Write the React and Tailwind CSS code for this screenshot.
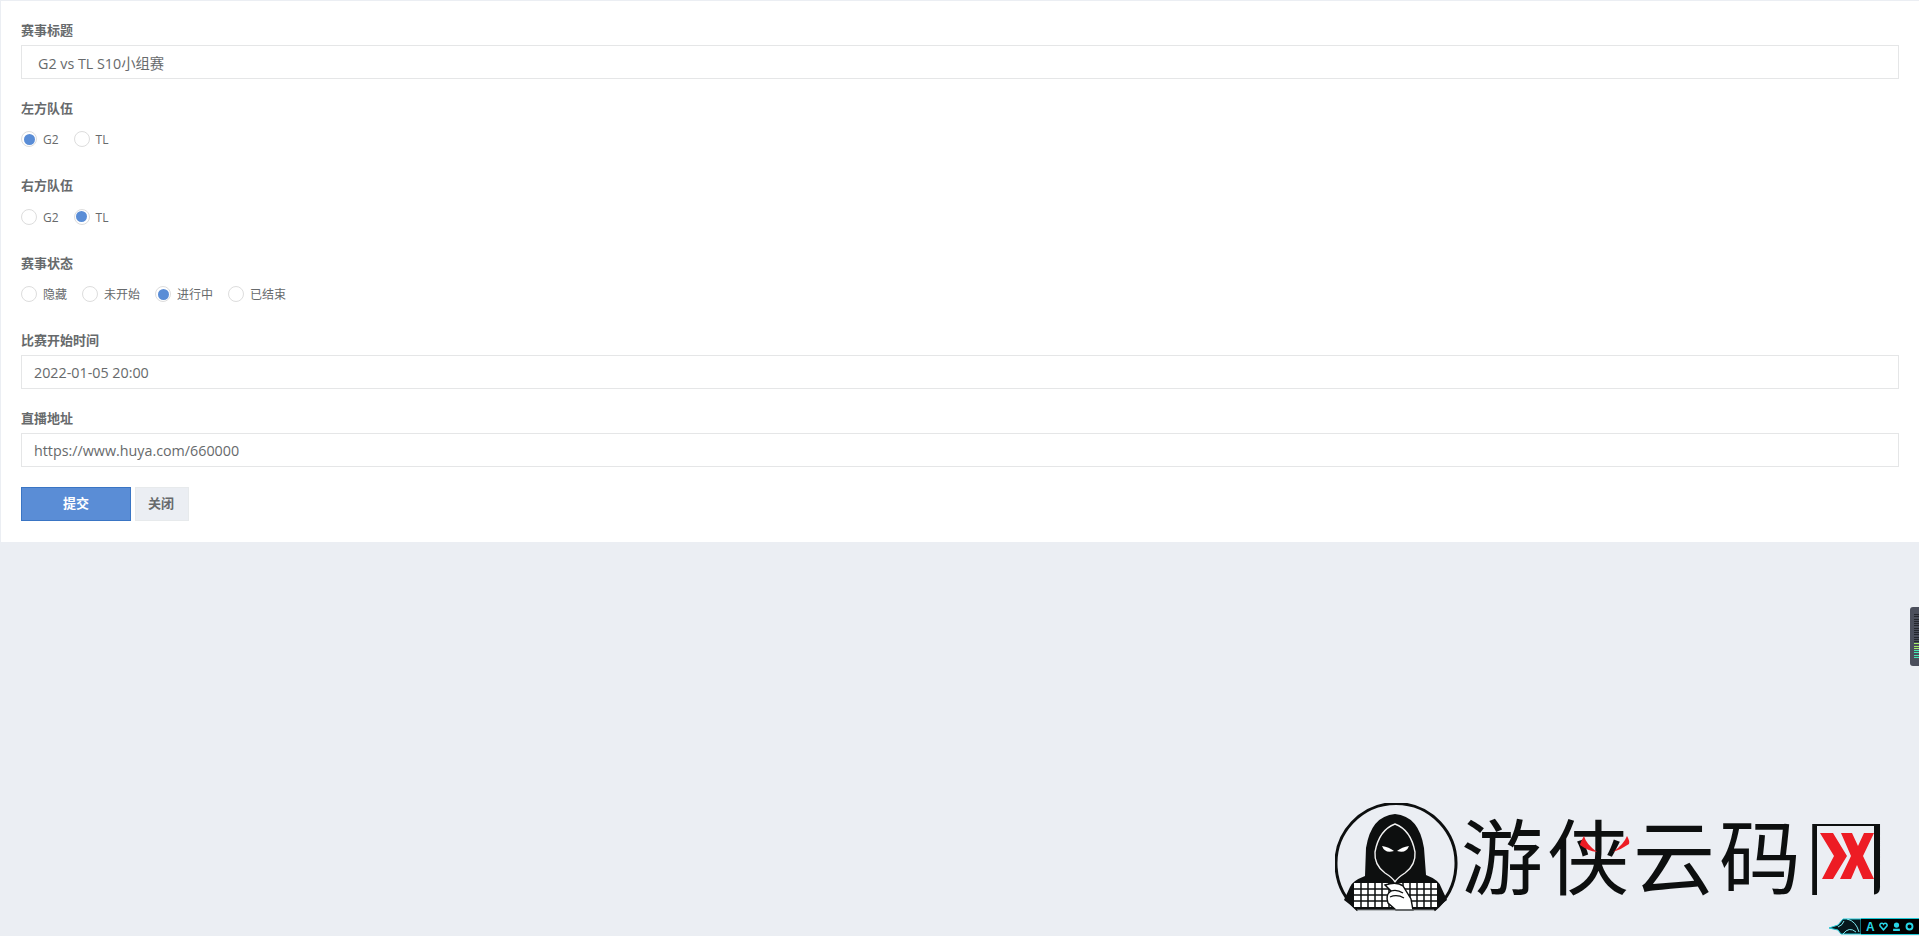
import React from 'react';

const FONT = "font-['Open_Sans','Noto_Sans_CJK_SC',sans-serif]";

function Field({ label, children }) {
  return (
    <div className="mb-5">
      <label className="block h-[18.6px] mb-[5px] text-[13px] leading-[18.6px] font-bold text-[#676a6c]">{label}</label>
      {children}
    </div>
  );
}

function TextInput({ value, indent }) {
  return (
    <input
      readOnly
      value={value}
      className={`block w-full h-[34px] border border-[#e5e6e7] bg-white pr-3 pt-px text-[14.3px] text-[#676a6c] outline-none ${indent ? 'pl-4' : 'pl-3'}`}
    />
  );
}

function Radio({ label, checked }) {
  return (
    <label className="flex items-center gap-1.5 mr-[15px] text-xs text-[#676a6c]">
      <span className="flex items-center justify-center w-4 h-4 rounded-full border border-[#dddddd] bg-white">
        {checked && <span className="w-[11px] h-[11px] rounded-full bg-[#5a8dd6]" />}
      </span>
      <span className="pt-0.5">{label}</span>
    </label>
  );
}

function RadioGroup({ options, value }) {
  return (
    <div className="flex items-center h-[34px]">
      {options.map((o) => <Radio key={o} label={o} checked={o === value} />)}
    </div>
  );
}

function HackerIcon() {
  const cols = [26, 33, 40, 47, 54, 61, 68, 75, 82, 89, 96];
  const rows = [86, 92, 98];
  return (
    <svg viewBox="0 0 124 110" className="w-[124px] h-[110px] shrink-0">
      <path d="M23 107 A60 60 0 1 1 99 107" fill="none" stroke="#0d0f0f" strokeWidth="3" />
      <path d="M9 97 L15 84 Q17 78 30 73 L31 45 Q36 13 60 11 Q84 13 89 45 L91 72 Q104 77 106 84 L112 97 L99 107 L22 107 Z" fill="#0d0f0f" />
      <path d="M60 21 Q44 27 40 49 Q39 62 50 70 Q58 75 60 79 Q62 75 70 70 Q81 62 80 49 Q76 27 60 21 Z" fill="#0d0f0f" stroke="#f2f2f2" strokeWidth="1.4" />
      <path d="M47 43 Q54 44 59 48 Q50 51 47 43 Z M74 43 Q67 44 62 48 Q71 51 74 43 Z" fill="#ffffff" />
      <rect x="19" y="80" width="83" height="24" fill="#ffffff" />
      {cols.map((x) => <path key={x} d={`M${x} 80V104`} stroke="#0d0f0f" strokeWidth="1.5" />)}
      {rows.map((y) => <path key={y} d={`M19 ${y}H102`} stroke="#0d0f0f" strokeWidth="1.5" />)}
      <path d="M50 82 Q62 78 68 83 L76 96 L78 107 L61 107 L53 100 Q50 92 56 88 Z" fill="#ffffff" stroke="#0d0f0f" strokeWidth="1.4" />
      <path d="M56 88 Q62 86 68 90M55 94 Q62 91 69 95" fill="none" stroke="#0d0f0f" strokeWidth="1.3" />
      <path d="M22 107H99" stroke="#8a8d90" strokeWidth="1" />
    </svg>
  );
}

function Watermark() {
  return (
    <div className="absolute left-[1335px] top-[803px] flex items-start pointer-events-none">
      <HackerIcon />
      <div className="relative mt-[-8px] ml-0.5">
        <span className="block whitespace-nowrap text-[82px] leading-[116px] tracking-[4px] font-['Noto_Sans_CJK_SC',sans-serif] font-normal text-[#0d0f0f]">游侠云码网</span>
        {/* red marks over the logo lettering */}
        <svg viewBox="0 0 57 72" className="absolute left-[356px] top-[31px] w-[57px] h-[72px]">
          <rect x="0" y="0" width="57" height="72" fill="#ebeef3" />
          <path transform="translate(3 7)" d="M0 0H13L27 23L13 46H2L14 23Z M21 0H32L38 13L44 0H54L43 23L54 46H43L37 32L31 46H20L31 23Z" fill="#ed1c24" />
        </svg>
        <svg viewBox="0 0 51 16" className="absolute left-[119px] top-[41px] w-[51px] h-4">
          <path d="M4 0 Q0 7 0 9 Q8 15 17 16 Q6 8 4 0 Z M47 0 Q50 5 49 8 Q42 13 33 16 Q44 8 47 0 Z" fill="#ed1c24" />
        </svg>
      </div>
    </div>
  );
}

function LevelMeter() {
  const bars = Array.from({ length: 20 });
  return (
    <div className="absolute right-0 top-[607px] w-[9px] h-[59px] rounded-l-[3px] bg-[#4b4f5c] flex flex-col gap-[1.25px] pt-[7px] pl-1">
      {bars.map((_, i) => (
        <span key={i} className={`block h-[1px] w-[5px] ${i < 13 ? 'bg-[#23262d]' : i < 16 ? 'bg-[#a5ef6a]' : 'bg-[#45e6b4]'}`} />
      ))}
    </div>
  );
}

function BadgeBar() {
  return (
    <div className="absolute right-0 bottom-px flex items-center h-[17px]">
      <svg viewBox="0 0 32 17" className="w-8 h-[17px]">
        <path d="M0 10 L9 7 L14 1 H32 V16 H12 L9 12 Z" fill="#07171c" stroke="#1fc7d4" strokeWidth="1" />
        <path d="M9 9 Q14 7 15 3 M14 16 Q20 8 27 14 M18 1 Q27 3 30 14" fill="none" stroke="#7fe9f0" strokeWidth="1" />
      </svg>
      <div className="flex items-center gap-1 h-[17px] w-[58px] pl-[5px] bg-black border-y border-[#1fc7d4] text-[#28d6e6]">
        <span className="text-xs leading-none font-bold font-['Liberation_Sans',sans-serif]">A</span>
        <svg viewBox="0 0 24 24" className="w-[9px] h-[9px]" fill="none" stroke="currentColor" strokeWidth="4"><path d="M12 21 L3 11 A5 5 0 0 1 12 6 A5 5 0 0 1 21 11 Z" /></svg>
        <svg viewBox="0 0 24 24" className="w-[9px] h-[9px]" fill="currentColor"><circle cx="12" cy="8" r="7" /><rect x="3" y="18" width="18" height="6" /></svg>
        <svg viewBox="0 0 24 24" className="w-[9px] h-[9px]" fill="none" stroke="currentColor" strokeWidth="5"><circle cx="12" cy="12" r="8" /></svg>
      </div>
    </div>
  );
}

export default function App() {
  return (
    <div className={`relative w-full h-[936px] overflow-hidden bg-[#ebeef3] pt-px pl-px ${FONT}`}>
      <form className="bg-white px-5 pt-5 pb-[21px]">
        <Field label="赛事标题"><TextInput value="G2 vs TL S10小组赛" indent /></Field>
        <Field label="左方队伍"><RadioGroup options={['G2', 'TL']} value="G2" /></Field>
        <Field label="右方队伍"><RadioGroup options={['G2', 'TL']} value="TL" /></Field>
        <Field label="赛事状态"><RadioGroup options={['隐藏', '未开始', '进行中', '已结束']} value="进行中" /></Field>
        <Field label="比赛开始时间"><TextInput value="2022-01-05 20:00" /></Field>
        <Field label="直播地址"><TextInput value="https://www.huya.com/660000" /></Field>
        <div className="flex gap-1">
          <button type="button" className="w-[110px] h-[34px] pt-px border border-[#3a75c4] bg-[#5a8dd6] text-[13px] font-bold text-white">提交</button>
          <button type="button" className="w-[54px] h-[34px] pt-px pr-0.5 border border-[#e7eaec] bg-[#ebeef3] text-[13px] font-bold text-[#676a6c]">关闭</button>
        </div>
      </form>
      <Watermark />
      <LevelMeter />
      <BadgeBar />
    </div>
  );
}
